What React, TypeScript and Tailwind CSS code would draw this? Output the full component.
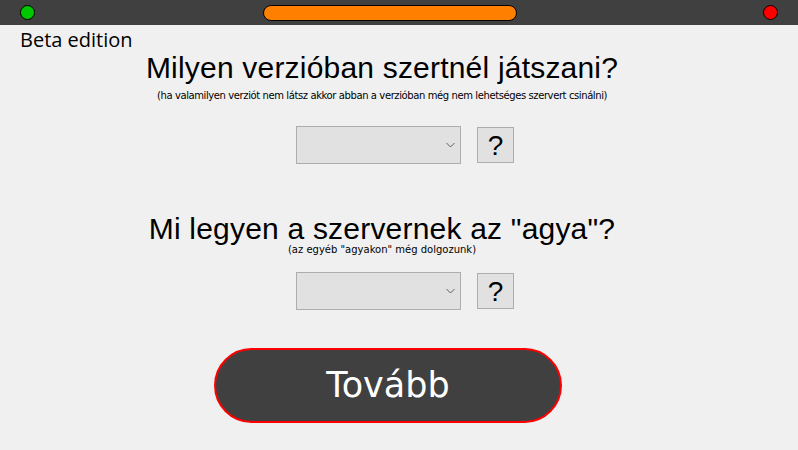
import React from "react";

function Chevron() {
  return (
    <svg width="9" height="6" viewBox="0 0 9 6" className="shrink-0">
      <path d="M0.5 1 L4.5 5 L8.5 1" fill="none" stroke="#606060" strokeWidth="1" />
    </svg>
  );
}

function Picker() {
  return (
    <div className="flex items-center gap-[16px]">
      <div className="w-[165px] h-[38px] bg-[#e1e1e1] border border-[#adadad] flex items-center justify-end pr-[5px]">
        <Chevron />
      </div>
      <button className="w-[37px] h-[36px] bg-[#e1e1e1] border border-[#adadad] flex items-center justify-center text-[28px] leading-none text-black font-['Liberation_Sans',sans-serif] pt-[2px]">
        ?
      </button>
    </div>
  );
}

export default function App() {
  return (
    <div className="w-[798px] h-[450px] bg-[#f0f0f0] overflow-hidden flex flex-col font-['Liberation_Sans',sans-serif]">
      {/* title bar */}
      <div className="h-[25px] bg-[#404040] flex items-center px-[20px] shrink-0">
        <div className="w-[15px] h-[15px] rounded-full bg-[#00c800] border border-black" />
        <div className="w-[254px] h-[16px] rounded-full bg-[#ff8000] border border-black ml-[228px]" />
        <div className="w-[15px] h-[15px] rounded-full bg-[#ff0000] border border-black ml-auto" />
      </div>

      <div className="pl-[20px] pt-[5px] h-[27px] text-[20px] leading-[20px] text-black font-['Open_Sans',sans-serif]">
        Beta edition
      </div>

      <div className="flex flex-col items-center pr-[34px]">
        <h1 className="text-[30px] leading-[32px] text-black tracking-[0.2px]">Milyen verzióban szertnél játszani?</h1>
        <p className="text-[10px] leading-[12px] text-black mt-[6px] font-['DejaVu_Sans',sans-serif] tracking-[-0.4px]">
          (ha valamilyen verziót nem látsz akkor abban a verzióban még nem lehetséges szervert csinálni)
        </p>
        <div className="ml-[46px] mt-[24px]">
          <Picker />
        </div>
        <h1 className="text-[30px] leading-[32px] text-black mt-[49px] tracking-[0.2px]">Mi legyen a szervernek az "agya"?</h1>
        <p className="text-[10px] leading-[12px] text-black mt-[-1px] font-['DejaVu_Sans',sans-serif]">
          (az egyéb "agyakon" még dolgozunk)
        </p>
        <div className="ml-[46px] mt-[16px]">
          <Picker />
        </div>
        <button className="ml-[12px] mt-[38px] w-[348px] h-[75px] rounded-full bg-[#404040] border-2 border-[#ff0000] text-white text-[35px] font-['DejaVu_Sans',sans-serif] flex items-center justify-center">
          Tovább
        </button>
      </div>
    </div>
  );
}
